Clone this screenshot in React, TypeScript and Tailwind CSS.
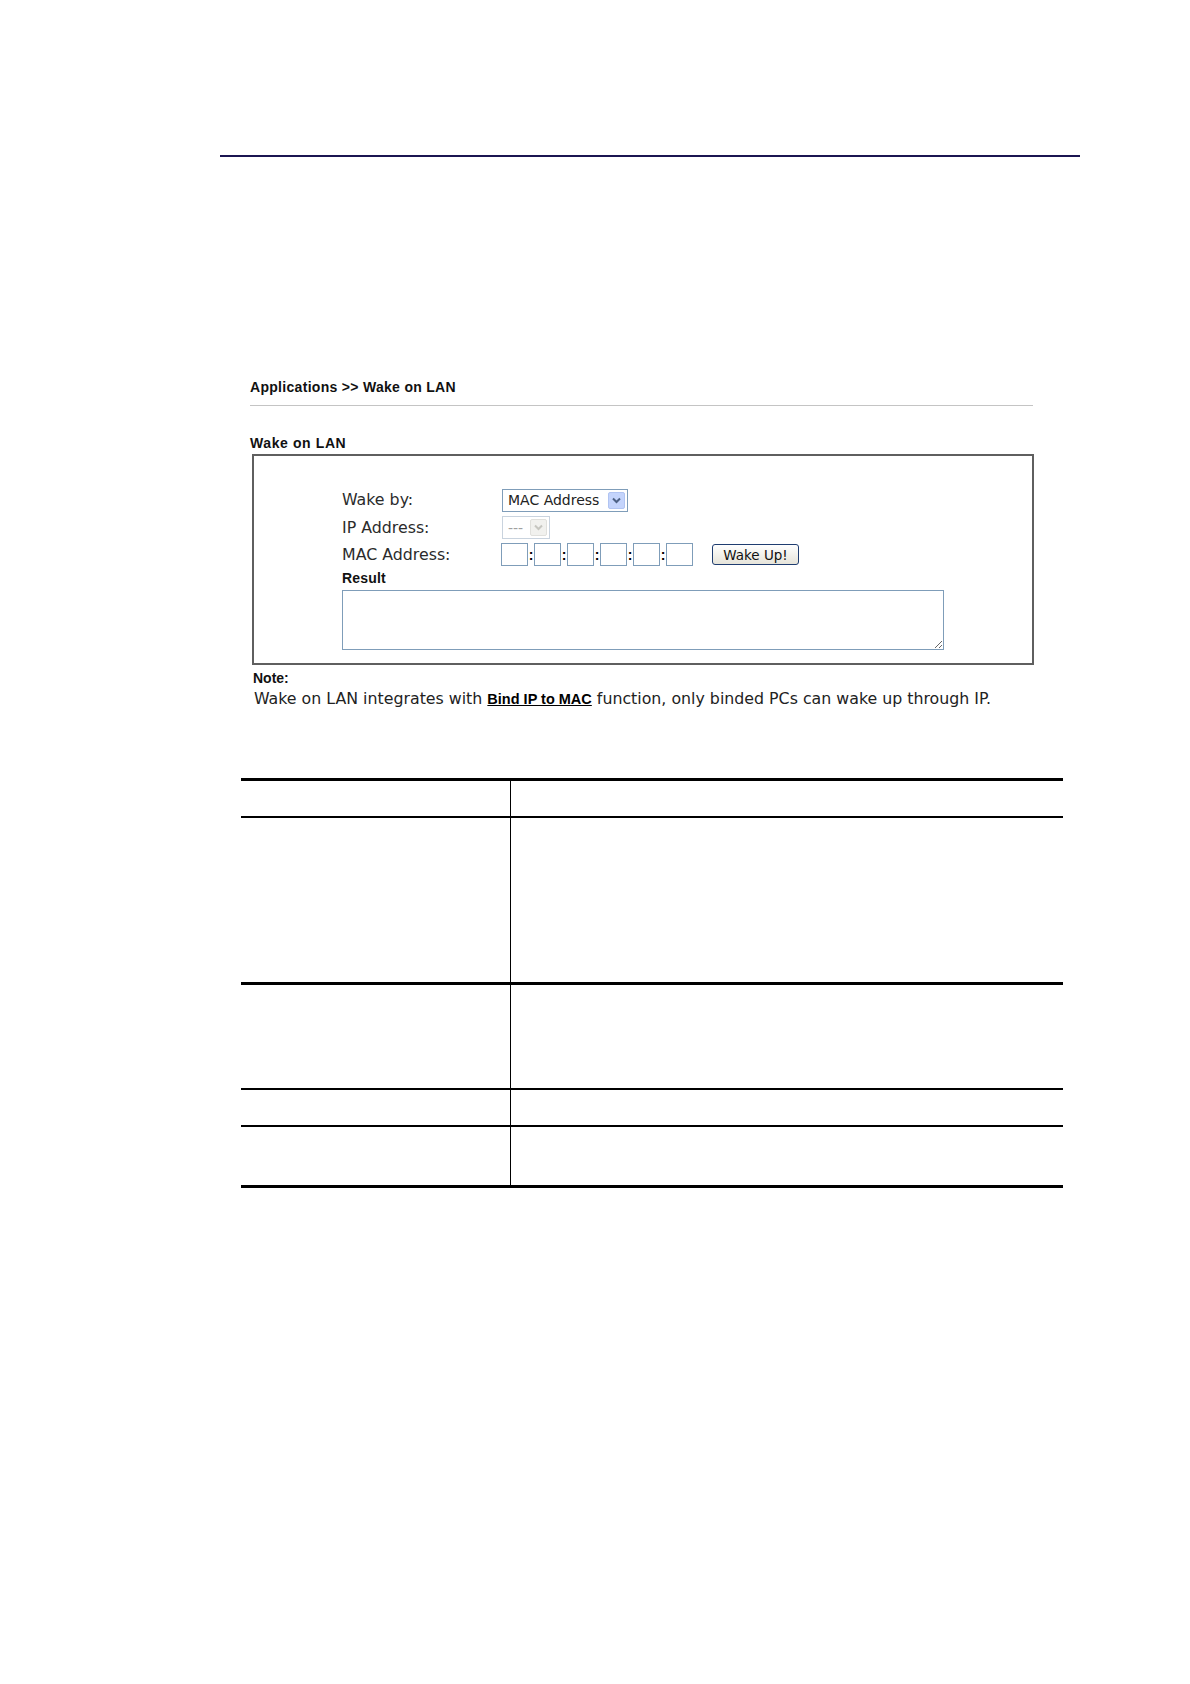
import React from 'react';

const sans = { fontFamily: '"DejaVu Sans", Verdana, sans-serif' };
const arial = { fontFamily: '"Liberation Sans", Arial, sans-serif' };

const Chevron: React.FC<{ color: string }> = ({ color }) => (
  <svg width="9" height="7" viewBox="0 0 9 7" fill="none">
    <path d="M1 1.5l3.5 3.5L8 1.5" stroke={color} strokeWidth="2" />
  </svg>
);

const XpSelect: React.FC<{ label: string; width: string; disabled?: boolean }> = ({
  label,
  width,
  disabled,
}) => (
  <div
    className={`${width} h-[23px] flex items-center justify-between border pl-[5px] pr-[2px] ${
      disabled ? 'border-[#c9d3de] text-[#a0a0a0]' : 'border-[#7f9db9] text-[#222]'
    }`}
  >
    <span className="text-[14px] leading-[16px]" style={sans}>
      {label}
    </span>
    <span
      className={`w-[17px] h-[17px] flex items-center justify-center rounded-[2px] border ${
        disabled ? 'bg-[#f1f1ee] border-[#e0e0dc]' : 'bg-[#c4d4fc] border-[#b1c4f2]'
      }`}
    >
      <Chevron color={disabled ? '#c6c6c0' : '#4d6185'} />
    </span>
  </div>
);

const MacBox = () => (
  <input readOnly className="w-[27px] h-[23px] border border-[#7f9db9] bg-white outline-none" />
);

const Colon = () => (
  <span className="w-[6px] text-center text-[14px] font-bold leading-[16px] text-black" style={arial}>
    :
  </span>
);

export default function App() {
  const rows = [
    { h: 'h-[35px]', border: 'border-b-2' },
    { h: 'h-[164px]', border: 'border-b-[3px]' },
    { h: 'h-[103px]', border: 'border-b-2' },
    { h: 'h-[35px]', border: 'border-b-2' },
    { h: 'h-[58px]', border: 'border-b-[3px]' },
  ];

  return (
    <div className="w-[1190px] min-h-[1684px] bg-white pt-[155px]">
      <div className="ml-[220px] w-[860px] h-[2px] bg-[#1b1551]" />

      <div className="ml-[250px] w-[784px] mt-[222px]">
        <p className="font-bold text-[14px] leading-[16px] tracking-[0.3px] text-[#111]" style={arial}>
          Applications &gt;&gt; Wake on LAN
        </p>
        <div className="mt-[10px] h-px w-[783px] bg-[#c4c4c4]" />

        <p className="mt-[29px] font-bold text-[14px] leading-[16px] tracking-[0.6px] text-[#111]" style={arial}>
          Wake on LAN
        </p>

        <div className="mt-[3px] ml-[2px] w-[782px] border-2 border-[#5f5f5f] pt-[30px] pb-[13px] pl-[88px]">
          <div className="flex items-center h-[28px]">
            <span className="w-[160px] text-[15.8px] text-[#2b2b2b]" style={sans}>
              Wake by:
            </span>
            <XpSelect label="MAC Address" width="w-[126px]" />
          </div>
          <div className="flex items-center h-[27px]">
            <span className="w-[160px] text-[15.8px] text-[#2b2b2b]" style={sans}>
              IP Address:
            </span>
            <XpSelect label="---" width="w-[48px]" disabled />
          </div>
          <div className="flex items-center h-[27px]">
            <span className="w-[159px] text-[15.8px] text-[#2b2b2b]" style={sans}>
              MAC Address:
            </span>
            <div className="flex items-center">
              <MacBox />
              <Colon />
              <MacBox />
              <Colon />
              <MacBox />
              <Colon />
              <MacBox />
              <Colon />
              <MacBox />
              <Colon />
              <MacBox />
            </div>
            <button
              className="ml-[19px] w-[87px] h-[21px] rounded-[3px] border border-[#1f3d70] bg-gradient-to-b from-white to-[#e6e4da] text-[13.5px] leading-[16px] text-[#111]"
              style={sans}
            >
              Wake Up!
            </button>
          </div>
          <p className="h-[20px] flex items-center font-bold text-[14px] tracking-[0.2px] text-[#111]" style={arial}>
            Result
          </p>
          <textarea
            readOnly
            className="mt-[2px] block w-[602px] h-[60px] border border-[#7f9db9] bg-white outline-none"
          />
        </div>

        <p className="mt-[5px] ml-[3px] font-bold text-[14px] leading-[16px] text-[#111]" style={arial}>
          Note:
        </p>
        <p className="mt-[3px] ml-[4px] text-[15.8px] leading-[20px] text-[#222]" style={sans}>
          Wake on LAN integrates with{' '}
          <span className="font-bold underline text-[14.5px] text-black" style={arial}>
            Bind IP to MAC
          </span>{' '}
          function, only binded PCs can wake up through IP.
        </p>
      </div>

      <div className="ml-[241px] mt-[69px] w-[822px] border-t-[3px] border-black">
        {rows.map((r, i) => (
          <div key={i} className={`grid grid-cols-[270px_1fr] ${r.border} border-black`}>
            <div className={`${r.h} border-r border-black`} />
            <div className={r.h} />
          </div>
        ))}
      </div>
    </div>
  );
}
